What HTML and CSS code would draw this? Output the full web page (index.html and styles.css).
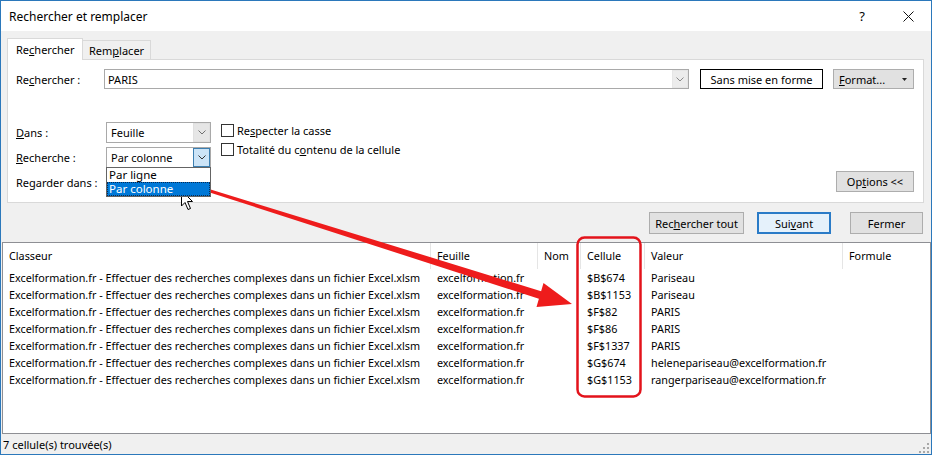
FILE: index.html
```html
<!DOCTYPE html>
<html lang="fr">
<head>
<meta charset="utf-8">
<title>Rechercher et remplacer</title>
<link rel="stylesheet" href="styles.css">
</head>
<body>
<div class="stage">
  <div class="window">
    <div class="titlebar">
      <span class="title">Rechercher et remplacer</span>
      <span class="cap-btn help">?</span>
      <span class="cap-btn close"><svg width="11" height="11" viewBox="0 0 11 11"><path d="M0.5 0.5L10.5 10.5M10.5 0.5L0.5 10.5" stroke="#111" stroke-width="1" fill="none"/></svg></span>
    </div>
    <div class="client">
      <div class="tabs">
        <div class="tab active">Re<u>c</u>hercher</div>
        <div class="tab inactive">Rem<u>p</u>lacer</div>
      </div>
      <div class="panel">
        <div class="find-row">
          <span class="lbl find-lbl">Re<u>c</u>hercher :</span>
          <div class="combo find">
            <span class="combo-val">PARIS</span>
            <span class="combo-btn"><svg width="8" height="5" viewBox="0 0 8 5"><path d="M0.5 0.5L4 4L7.5 0.5" stroke="#8a8a8a" fill="none"/></svg></span>
          </div>
          <button class="btn plain">Sans mise en forme</button>
          <button class="btn fmt"><span><u>F</u>ormat...</span><svg width="5" height="3" viewBox="0 0 5 3"><path d="M0 0H5L2.5 3Z" fill="#222"/></svg></button>
        </div>
        <div class="opts">
          <div class="opt-grid">
            <span class="lbl"><u>D</u>ans :</span>
            <div class="combo sm">
              <span class="combo-val">Feuille</span>
              <span class="combo-btn"><svg width="8" height="5" viewBox="0 0 8 5"><path d="M0.5 0.5L4 4L7.5 0.5" stroke="#707070" fill="none"/></svg></span>
            </div>
            <span class="lbl"><u>R</u>echerche :</span>
            <div class="combo sm">
              <span class="combo-val">Par colonne</span>
              <span class="combo-btn hot"><svg width="8" height="5" viewBox="0 0 8 5"><path d="M0.5 0.5L4 4L7.5 0.5" stroke="#333" fill="none"/></svg></span>
              <div class="dropdown">
                <div class="dd-item">Par ligne</div>
                <div class="dd-item sel">Par colonne</div>
              </div>
            </div>
            <span class="lbl">Re<u>g</u>arder dans :</span>
            <span></span>
          </div>
          <div class="checks">
            <div class="chk"><span class="box"></span><span>Re<u>s</u>pecter la casse</span></div>
            <div class="chk"><span class="box"></span><span>Totalité du c<u>o</u>ntenu de la cellule</span></div>
          </div>
          <button class="btn options">Op<u>t</u>ions &lt;&lt;</button>
        </div>
      </div>
      <div class="actions">
        <button class="btn act w-all">Rec<u>h</u>ercher tout</button>
        <button class="btn act w-next default">Sui<u>v</u>ant</button>
        <button class="btn act w-close">Fermer</button>
      </div>
      <div class="list">
        <div class="lv-head">
          <span class="hc first">Classeur</span>
          <span class="hc">Feuille</span>
          <span class="hc">Nom</span>
          <span class="hc">Cellule</span>
          <span class="hc">Valeur</span>
          <span class="hc last">Formule</span>
        </div>
        <div class="lv-row"><span class="c first">Excelformation.fr - Effectuer des recherches complexes dans un fichier Excel.xlsm</span><span class="c">excelformation.fr</span><span class="c"></span><span class="c">$B$674</span><span class="c">Pariseau</span><span class="c"></span></div>
        <div class="lv-row"><span class="c first">Excelformation.fr - Effectuer des recherches complexes dans un fichier Excel.xlsm</span><span class="c">excelformation.fr</span><span class="c"></span><span class="c">$B$1153</span><span class="c">Pariseau</span><span class="c"></span></div>
        <div class="lv-row"><span class="c first">Excelformation.fr - Effectuer des recherches complexes dans un fichier Excel.xlsm</span><span class="c">excelformation.fr</span><span class="c"></span><span class="c">$F$82</span><span class="c">PARIS</span><span class="c"></span></div>
        <div class="lv-row"><span class="c first">Excelformation.fr - Effectuer des recherches complexes dans un fichier Excel.xlsm</span><span class="c">excelformation.fr</span><span class="c"></span><span class="c">$F$86</span><span class="c">PARIS</span><span class="c"></span></div>
        <div class="lv-row"><span class="c first">Excelformation.fr - Effectuer des recherches complexes dans un fichier Excel.xlsm</span><span class="c">excelformation.fr</span><span class="c"></span><span class="c">$F$1337</span><span class="c">PARIS</span><span class="c"></span></div>
        <div class="lv-row"><span class="c first">Excelformation.fr - Effectuer des recherches complexes dans un fichier Excel.xlsm</span><span class="c">excelformation.fr</span><span class="c"></span><span class="c">$G$674</span><span class="c">heleneparis​eau@excelformation.fr</span><span class="c"></span></div>
        <div class="lv-row"><span class="c first">Excelformation.fr - Effectuer des recherches complexes dans un fichier Excel.xlsm</span><span class="c">excelformation.fr</span><span class="c"></span><span class="c">$G$1153</span><span class="c">rangerpariseau@excelformation.fr</span><span class="c"></span></div>
      </div>
      <div class="status">
        <span>7 cellule(s) trouvée(s)</span>
        <svg class="grip" width="10" height="10" viewBox="0 0 10 10"><g fill="#a8a8a8"><rect x="8" y="0" width="2" height="2"/><rect x="4" y="4" width="2" height="2"/><rect x="8" y="4" width="2" height="2"/><rect x="0" y="8" width="2" height="2"/><rect x="4" y="8" width="2" height="2"/><rect x="8" y="8" width="2" height="2"/></g></svg>
      </div>
    </div>
  </div>
  <svg class="annot" width="932" height="455" viewBox="0 0 932 455">
    <rect x="577.5" y="237.5" width="63" height="159" rx="7" ry="7" fill="none" stroke="#e3131b" stroke-width="2.5"/>
    <polygon points="207.4,188.6 541.1,291.2 543.5,283 572,304 536.5,307 538.9,298.8 206.6,191.4" fill="#ee1c1c"/>
    <path d="M181.5 190.5 L181.5 206 L185 202.5 L188 209.5 L190.5 208.5 L187.5 201.5 L192.5 201.5 Z" fill="#fff" stroke="#000" stroke-width="1" stroke-linejoin="miter"/>
  </svg>
</div>
</body>
</html>
```
FILE: styles.css
```css
html, body {
  margin: 0;
  padding: 0;
}
body {
  font-family: "Noto Sans", "Segoe UI", sans-serif;
  font-size: 11px;
  color: #000;
  background: #f0f0f0;
}
.stage {
  position: relative;
  width: 932px;
  height: 455px;
  overflow: hidden;
}
.window {
  box-sizing: border-box;
  width: 932px;
  height: 455px;
  border: 1px solid #2b78bb;
  display: flex;
  flex-direction: column;
  background: #f0f0f0;
}
.titlebar {
  flex: none;
  height: 30px;
  background: #fff;
  display: flex;
  align-items: center;
  padding-left: 8px;
}
.title {
  flex: 1;
  font-size: 12px;
}
.cap-btn {
  width: 46px;
  height: 30px;
  display: flex;
  align-items: center;
  justify-content: center;
  font-size: 13px;
}
.client {
  flex: 1;
  min-height: 0;
  display: flex;
  flex-direction: column;
}
.tabs {
  flex: none;
  display: flex;
  align-items: flex-end;
  height: 21px;
  margin-top: 7px;
  padding-left: 6px;
}
.tab {
  box-sizing: border-box;
  border: 1px solid #d9d9d9;
  border-bottom: none;
  white-space: nowrap;
}
.tab.active {
  position: relative;
  z-index: 1;
  width: 76px;
  height: 22px;
  margin-bottom: -1px;
  padding-left: 8px;
  line-height: 21px;
  background: #fff;
}
.tab.inactive {
  width: 68px;
  height: 19px;
  border-left: none;
  padding-left: 6px;
  line-height: 19px;
  background: #f0f0f0;
}
.panel {
  flex: none;
  box-sizing: border-box;
  height: 144px;
  margin: 0 7px 0 6px;
  padding: 9px 9px 0 8px;
  background: #fff;
  border: 1px solid #d9d9d9;
}
.find-row {
  display: flex;
  align-items: center;
  height: 20px;
}
.lbl {
  white-space: nowrap;
}
.find-lbl {
  width: 88px;
  flex: none;
}
.combo {
  box-sizing: border-box;
  position: relative;
  display: flex;
  align-items: stretch;
  height: 20px;
  border: 1px solid #a9a9a9;
  background: #fff;
}
.combo.find {
  flex: 1;
  margin-right: 11px;
}
.combo.sm {
  height: 21px;
}
.combo-val {
  flex: 1;
  padding-left: 3px;
  display: flex;
  align-items: center;
}
.combo.sm .combo-val {
  padding-left: 4px;
}
.combo-btn {
  box-sizing: border-box;
  width: 17px;
  display: flex;
  align-items: center;
  justify-content: center;
  background: #e6e6e6;
  border: 1px solid #e0e0e0;
}
.combo.find .combo-btn {
  width: 16px;
  background: #ececec;
  border-color: #e6e6e6;
}
.combo-btn.hot {
  background: #cce4f7;
  border: 1px solid #3c7fb1;
}
.dropdown {
  position: absolute;
  z-index: 3;
  left: -1px;
  top: 19px;
  width: 105px;
  box-sizing: border-box;
  border: 1px solid #646464;
  background: #fff;
}
.dd-item {
  height: 14px;
  line-height: 14px;
  padding-left: 2px;
  font-size: 11.5px;
}
.dd-item.sel {
  background: #0078d7;
  color: #fff;
  outline: 1px dotted #0a2a50;
  outline-offset: -1px;
}
.btn {
  box-sizing: border-box;
  font: inherit;
  color: #000;
  background: #e1e1e1;
  border: 1px solid #adadad;
  padding: 0;
  margin: 0;
  height: 20px;
  white-space: nowrap;
}
.btn.plain {
  flex: none;
  width: 123px;
  margin-right: 10px;
  background: #fff;
  border-color: #000;
}
.btn.fmt {
  flex: none;
  width: 81px;
  display: flex;
  align-items: center;
  justify-content: space-between;
  padding: 0 6px 0 5px;
}
.opts {
  display: flex;
  align-items: flex-end;
  margin-top: 33px;
}
.opt-grid {
  display: grid;
  grid-template-columns: 90px 105px;
  grid-auto-rows: 21px;
  row-gap: 4px;
  align-items: center;
}
.checks {
  align-self: flex-start;
  margin: -1px 0 0 10px;
  display: flex;
  flex-direction: column;
}
.chk {
  height: 19px;
  display: flex;
  align-items: center;
  white-space: nowrap;
}
.box {
  box-sizing: border-box;
  width: 13px;
  height: 13px;
  margin-right: 3px;
  border: 1px solid #333;
  background: #fff;
}
.btn.options {
  margin: 0 0 1px auto;
  width: 78px;
  height: 21px;
}
.actions {
  flex: none;
  display: flex;
  justify-content: flex-end;
  height: 22px;
  margin-top: 9px;
  padding-right: 8px;
}
.btn.act {
  height: 22px;
}
.w-all {
  width: 95px;
  margin-right: 13px;
}
.w-next {
  width: 74px;
  margin-right: 19px;
}
.w-close {
  width: 73px;
}
.btn.default {
  border: 2px solid #2a7bc7;
  background: #e5f1fb;
}
.list {
  flex: 1;
  min-height: 0;
  margin: 8px 0 0 1px;
  background: #fff;
  border: 1px solid #8e8f94;
  overflow: hidden;
  font-size: 10.8px;
}
.lv-head,
.lv-row {
  display: grid;
  grid-template-columns: 428px 107px 43px 64px 198px 1fr;
}
.lv-head {
  height: 26px;
}
.hc {
  box-sizing: border-box;
  padding-left: 6px;
  line-height: 26px;
  border-right: 1px solid #e5e5e5;
  white-space: nowrap;
}
.hc.last {
  border-right: none;
}
.lv-row {
  height: 17px;
}
.c {
  padding-left: 6px;
  line-height: 17px;
  white-space: nowrap;
  overflow: hidden;
}
.hc.first,
.c.first {
  padding-left: 6px;
}
.status {
  flex: none;
  height: 20px;
  display: flex;
  align-items: center;
  justify-content: space-between;
  padding: 0 2px 0 2px;
}
.grip {
  align-self: flex-end;
  margin-bottom: 1px;
}
.annot {
  position: absolute;
  left: 0;
  top: 0;
  pointer-events: none;
}
```
